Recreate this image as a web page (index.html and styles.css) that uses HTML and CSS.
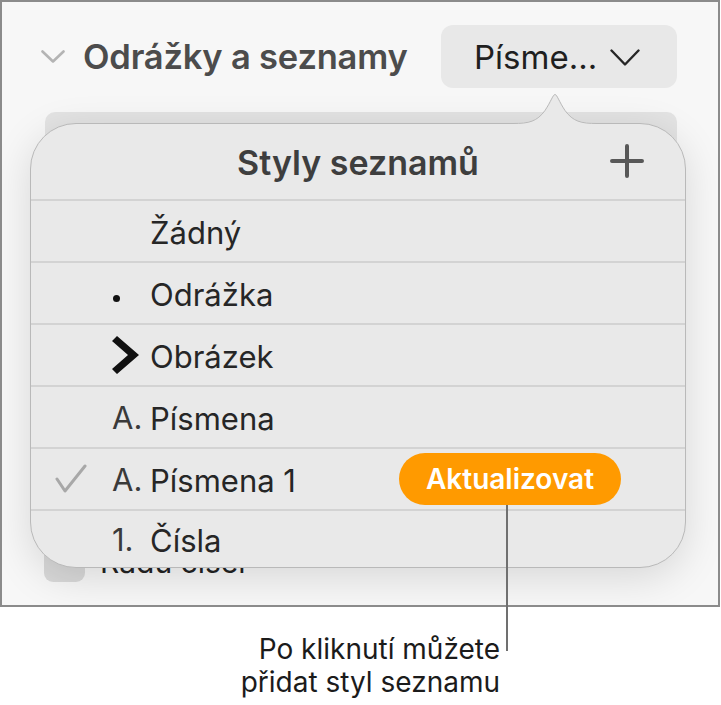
FILE: index.html
```html
<!DOCTYPE html>
<html lang="cs">
<head>
  <meta charset="UTF-8">
  <title>Odrážky a seznamy</title>
  <link rel="stylesheet" href="styles.css">
</head>
<body>
  <div class="shot">
    <div class="panel">
      <div class="section-head">
        <svg class="disclosure" width="24" height="14" viewBox="0 0 24 14"><polyline points="1.5,1.5 12,11.5 22.5,1.5"/></svg>
        <h2 class="section-title">Odrážky a seznamy</h2>
        <button class="style-menu">Písme...
          <svg class="menu-chevron" width="30" height="18" viewBox="0 0 30 18"><polyline points="1.5,1.5 15,15.5 28.5,1.5"/></svg>
        </button>
      </div>
      <div class="field"></div>
      <div class="option">
        <span class="checkbox"></span>
        <span class="option-label">Řadu čísel</span>
      </div>

      <!-- list style chooser opened from the menu button -->
      <div class="popover">
        <svg class="popover-arrow" width="84" height="34" viewBox="0 0 84 34">
          <path class="arrow-fill" d="M0,31 C16,31 24,29 32,18 C38,9 40,2 42,2 C44,2 46,9 52,18 C60,29 68,31 84,31 L84,34 L0,34 Z"/>
          <path class="arrow-line" d="M0,31.5 C16,31.5 24,29.5 32,18.5 C38,9.5 40,2.5 42,2.5 C44,2.5 46,9.5 52,18.5 C60,29.5 68,31.5 84,31.5"/>
        </svg>
        <div class="popover-head">
          <h3 class="popover-title">Styly seznamů</h3>
          <svg class="add" width="34" height="34" viewBox="0 0 34 34"><path d="M17,2 V32 M2,17 H32"/></svg>
        </div>
        <ul class="styles">
          <li><span class="check"></span><span class="mark"></span><span class="name">Žádný</span></li>
          <li><span class="check"></span><span class="mark"><span class="dot"></span></span><span class="name">Odrážka</span></li>
          <li>
            <span class="check"></span>
            <span class="mark">
              <svg width="28" height="38" viewBox="0 0 28 38"><polygon points="0,5 5,0 27,19 5,38 0,33 16,19"/></svg>
            </span>
            <span class="name">Obrázek</span>
          </li>
          <li><span class="check"></span><span class="mark">A.</span><span class="name">Písmena</span></li>
          <li>
            <span class="check">
              <svg width="32" height="30" viewBox="0 0 32 30"><polyline points="2,15 10,27 30,2"/></svg>
            </span>
            <span class="mark">A.</span>
            <span class="name">Písmena 1</span>
            <button class="update">Aktualizovat</button>
          </li>
          <li><span class="check"></span><span class="mark">1.</span><span class="name">Čísla</span></li>
        </ul>
      </div>
    </div>
    <div class="leader"></div>
    <p class="callout">Po kliknutí můžete<br>přidat styl seznamu</p>
  </div>
</body>
</html>
```

FILE: styles.css
```css
body {
  margin: 0;
  background: #fff;
  font-family: Inter, "Noto Sans", sans-serif;
  color: #1c1c1c;
}
.shot {
  position: relative;
  width: 721px;
  height: 705px;
}
.panel {
  position: relative;
  box-sizing: border-box;
  width: 720px;
  height: 607px;
  border: 2px solid #8b8b8b;
  background: #f7f7f7;
  overflow: hidden;
}
.section-head {
  display: flex;
  align-items: center;
  height: 63px;
  padding: 23px 41px 0 39px;
}
.disclosure {
  flex: none;
}
.disclosure polyline {
  fill: none;
  stroke: #b4b4b4;
  stroke-width: 2.6;
  stroke-linecap: round;
  stroke-linejoin: round;
}
.section-title {
  margin: 0 0 0 18px;
  font-size: 34.5px;
  font-weight: 600;
  color: #4c4c4c;
  letter-spacing: -0.2px;
}
.style-menu {
  margin-left: auto;
  display: flex;
  align-items: center;
  box-sizing: border-box;
  width: 236px;
  height: 63px;
  padding: 0 0 0 33px;
  border: none;
  border-radius: 12px;
  background: #e8e8e8;
  font-family: inherit;
  font-size: 33px;
  color: #1f1f1f;
}
.menu-chevron {
  margin: 2px 37px 0 auto;
}
.menu-chevron polyline {
  fill: none;
  stroke: #262626;
  stroke-width: 2.4;
  stroke-linecap: round;
  stroke-linejoin: round;
}
.field {
  height: 60px;
  margin: 24px 41px 0 43px;
  border-radius: 10px;
  background: #e3e3e3;
}
.option {
  display: flex;
  align-items: center;
  margin-top: 369px;
  padding-left: 42px;
}
.checkbox {
  width: 41px;
  height: 41px;
  border-radius: 9px;
  background: #d9d9d9;
}
.option-label {
  margin-left: 15px;
  font-size: 30px;
  color: #222;
}

/* popover */
.popover {
  position: absolute;
  left: 28px;
  top: 121px;
  box-sizing: border-box;
  width: 656px;
  border: 1px solid #b9b9b9;
  border-radius: 46px;
  background: #e9e9e9;
  box-shadow: 0 10px 40px rgba(0, 0, 0, 0.13);
}
.popover-arrow {
  position: absolute;
  left: 482px;
  top: -32px;
}
.arrow-fill {
  fill: #e9e9e9;
}
.arrow-line {
  fill: none;
  stroke: #b9b9b9;
  stroke-width: 1;
}
.popover-head {
  position: relative;
  display: flex;
  align-items: center;
  justify-content: center;
  height: 75px;
  border-bottom: 2px solid #d3d3d3;
}
.popover-title {
  margin: 2px 0 0;
  font-size: 34px;
  font-weight: 600;
  color: #3e3e3e;
}
.add {
  position: absolute;
  right: 41px;
  top: 20px;
}
.add path {
  stroke: #585858;
  stroke-width: 4;
  stroke-linecap: round;
}
.styles {
  list-style: none;
  margin: 0;
  padding: 0;
}
.styles li {
  display: flex;
  align-items: center;
  height: 60px;
  padding-left: 24px;
  border-bottom: 2px solid #d3d3d3;
}
.styles li:last-child {
  height: 56px;
  border-bottom: none;
}
.check {
  flex: none;
  width: 57px;
  display: flex;
  align-items: center;
}
.check polyline {
  fill: none;
  stroke: #a8a8a8;
  stroke-width: 3;
  stroke-linecap: round;
  stroke-linejoin: round;
}
.mark {
  flex: none;
  width: 38px;
  display: flex;
  align-items: center;
  font-size: 31px;
  color: #3a3a3a;
}
.dot {
  width: 7px;
  height: 7px;
  margin: 10px 0 0 1px;
  border-radius: 50%;
  background: #111;
}
.mark svg {
  fill: #111;
}
.name {
  margin-top: 3px;
  font-size: 31px;
  color: #262626;
}
.update {
  margin: 0 64px 0 auto;
  width: 222px;
  height: 52px;
  border: none;
  border-radius: 26px;
  background: #ff9a00;
  color: #fff;
  font-family: inherit;
  font-size: 28px;
  font-weight: 600;
}

/* callout */
.leader {
  position: absolute;
  left: 506px;
  top: 505px;
  width: 2px;
  height: 146px;
  background: #707070;
}
.callout {
  width: 500px;
  margin: 26px 0 0;
  text-align: right;
  font-size: 28px;
  line-height: 33px;
  color: #1b1b1b;
}
```
